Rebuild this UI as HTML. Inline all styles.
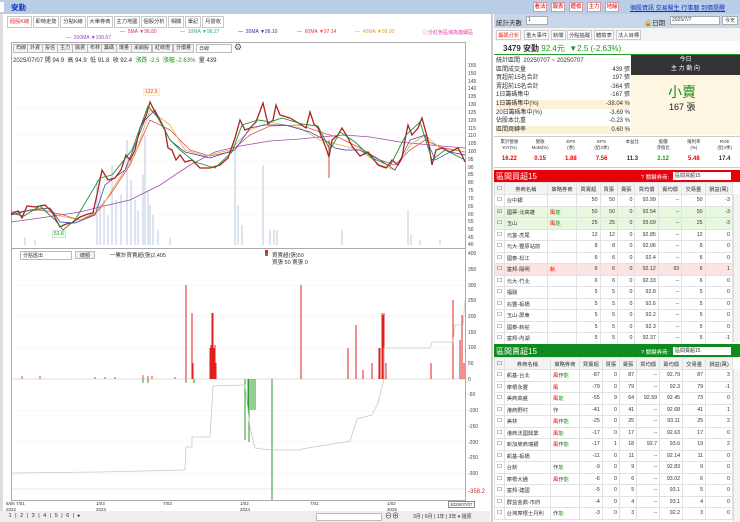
<!DOCTYPE html>
<html><head><meta charset="utf-8">
<style>
*{margin:0;padding:0;box-sizing:border-box}
body{width:740px;height:522px;overflow:hidden;background:#fff;font-family:"Liberation Sans","Noto Sans CJK TC",sans-serif;font-size:6px;color:#333;position:relative}
.a{position:absolute;white-space:nowrap}
.tab{position:absolute;top:16px;height:12px;border:1px solid #c8c8c8;background:#fff;font-size:5.3px;line-height:10px;text-align:center;overflow:hidden}
.btn{position:absolute;top:44px;height:9px;border:1px solid #bbb;background:#f4f4f4;font-size:5px;line-height:7px;padding:0 2px}
.ax{position:absolute;left:468px;font-size:5px;color:#444}
table{border-collapse:collapse;position:absolute;left:494px;width:239px;font-size:5.3px}
td{border:1px solid #e2e2e2;height:11.5px;padding:0 2px;text-align:right;white-space:nowrap}
td.n{text-align:left}
td.c{width:8px;text-align:center}
.r{color:#e00}.g{color:#1a9a1a}
tr.h td{background:#f3f3f3;text-align:center;height:12px}
</style></head><body>
<div class="a" style="left:0;top:0;width:740px;height:14px;background:#b9cde6"></div>
<div class="a" style="left:0;top:2px;width:4px;height:10px;background:#fff"></div>
<div class="a" style="left:11px;top:2px;font-size:7.5px;color:#1330c0;font-weight:bold">安勤</div>
<div class="a" style="left:533px;top:2px;width:14px;height:10px;background:#fff;border:1px solid #d99;color:#d00;font-size:5.5px;line-height:8px;text-align:center">看法</div>
<div class="a" style="left:551px;top:2px;width:14px;height:10px;background:#fff;border:1px solid #d99;color:#d00;font-size:5.5px;line-height:8px;text-align:center">報表</div>
<div class="a" style="left:569px;top:2px;width:14px;height:10px;background:#fff;border:1px solid #d99;color:#d00;font-size:5.5px;line-height:8px;text-align:center">體檢</div>
<div class="a" style="left:587px;top:2px;width:14px;height:10px;background:#fff;border:1px solid #d99;color:#d00;font-size:5.5px;line-height:8px;text-align:center">主力</div>
<div class="a" style="left:605px;top:2px;width:14px;height:10px;background:#fff;border:1px solid #d99;color:#d00;font-size:5.5px;line-height:8px;text-align:center">地緣</div>
<div class="a" style="left:630px;top:3px;font-size:6px;color:#1330c0;text-decoration:underline">個股資訊 交易醫生 行事曆 到價提醒</div>
<div class="a" style="left:0;top:14px;width:3px;height:508px;background:#ddd"></div>
<div class="tab" style="left:7px;width:25px;color:#e03030">個股K線</div>
<div class="tab" style="left:33px;width:26px">即時走勢</div>
<div class="tab" style="left:60px;width:26px">分點K線</div>
<div class="tab" style="left:87px;width:26px">大單券商</div>
<div class="tab" style="left:114px;width:26px">主力地圖</div>
<div class="tab" style="left:141px;width:26px">個股分析</div>
<div class="tab" style="left:168px;width:16px">相關</div>
<div class="tab" style="left:185px;width:16px">筆記</div>
<div class="tab" style="left:202px;width:22px">月營收</div>
<div class="a" style="left:120px;top:29px;color:#d04050;font-size:5px">— &nbsp;5MA ▼98.80</div>
<div class="a" style="left:180px;top:29px;color:#30b080;font-size:5px">— &nbsp;10MA ▼98.27</div>
<div class="a" style="left:238px;top:29px;color:#3030a0;font-size:5px">— &nbsp;20MA ▼99.10</div>
<div class="a" style="left:297px;top:29px;color:#e04040;font-size:5px">— &nbsp;60MA ▼97.14</div>
<div class="a" style="left:355px;top:29px;color:#e0a020;font-size:5px">— &nbsp;40MA ▼99.00</div>
<div class="a" style="left:423px;top:29px;color:#e040a0;font-size:5px">ⓘ分紅色區塊為連續區</div>
<div class="a" style="left:66px;top:35px;color:#a040c0;font-size:5px">— &nbsp;200MA ▼100.67</div>
<div class="a" style="left:11px;top:42px;width:455px;height:459px;border:1px solid #aaa"></div>
<div class="a" style="left:11px;top:248px;width:455px;height:1px;background:#aaa"></div>
<div class="btn" style="left:13px">均線</div><div class="btn" style="left:27px">外資</div><div class="btn" style="left:42px">投信</div><div class="btn" style="left:57px">主力</div><div class="btn" style="left:72px">融資</div><div class="btn" style="left:87px">布林</div><div class="btn" style="left:101px">籌碼</div><div class="btn" style="left:116px">爆量</div><div class="btn" style="left:131px">承銷股</div><div class="btn" style="left:152px">紅綠燈</div><div class="btn" style="left:173px">分價量</div>
<div class="a" style="left:196px;top:44px;width:36px;height:9px;border:1px solid #bbb;font-size:5px;padding-left:2px">日線</div>
<div class="a" style="left:234px;top:42px;font-size:9px;color:#555">⚙</div>
<div class="a" style="left:13px;top:55px;font-size:6px">2025/07/07 開 94.9 &nbsp;高 94.9 &nbsp;低 91.8 &nbsp;收 92.4 &nbsp;<span class="g">漲跌 -2.5 &nbsp;漲幅 -2.63%</span> &nbsp;量 439</div>
<div class="a" style="left:143px;top:88px;font-size:5px;color:#e05020;background:#fff8e8;border:1px solid #eee;padding:0 1px">132.5</div>
<div class="a" style="left:52px;top:230px;font-size:5px;color:#2a8a2a;background:#f0ffe8;border:1px solid #ddd;padding:0 1px">51.6</div>
<svg class="a" style="left:0;top:0" width="740" height="522">
<g stroke="#f0f0f0" stroke-width="0.6">
<line x1="12" y1="108" x2="465" y2="108"/><line x1="12" y1="135" x2="465" y2="135"/><line x1="12" y1="161" x2="465" y2="161"/><line x1="12" y1="188" x2="465" y2="188"/><line x1="12" y1="214" x2="465" y2="214"/>
<line x1="12" y1="285" x2="465" y2="285"/><line x1="12" y1="316" x2="465" y2="316"/><line x1="12" y1="348" x2="465" y2="348"/><line x1="12" y1="411" x2="465" y2="411"/><line x1="12" y1="442" x2="465" y2="442"/><line x1="12" y1="474" x2="465" y2="474"/><line x1="12" y1="489" x2="465" y2="489" stroke="#c8d0f0"/>
</g>
<g stroke="#c4d3e6" stroke-width="1.2">
<path d="M25 245V237M35 245V240M97 245V180M100 245V190M104 245V200M108 245V215M112 245V165M116 245V200M121 245V195M127 245V140M131 245V180M135 245V200M138 245V210M143 245V175M145 245V135M148 245V190M150 245V205M153 245V215M158 245V230M170 245V238M235 245V150M238 245V205M242 245V225M263 245V165M270 245V230M274 245V230M277 245V230M342 245V230M408 245V210M411 245V235M420 245V240M440 245V240"/>
</g>
<polyline fill="none" stroke="#a050b0" stroke-width="0.8" points="11,222 40,218 80,212 100,207 130,200 160,185 190,165 215,152 240,146 270,141 300,139 320,137 345,135 370,137 400,142 430,145 465,148"/>
<polyline fill="none" stroke="#e05050" stroke-width="0.8" points="11,212 40,210 60,214 80,220 95,214 110,195 130,165 150,120 170,130 180,140 190,150 210,156 230,152 250,135 270,126 300,125 320,132 340,138 360,148 380,160 395,165 410,150 425,140 440,147 465,152"/>
<polyline fill="none" stroke="#e0b040" stroke-width="0.8" points="11,215 40,208 60,216 80,220 100,210 115,185 135,155 150,110 170,125 185,150 205,156 230,150 250,130 270,122 300,128 320,140 340,145 360,150 380,165 395,170 410,145 425,135 440,148 465,152"/>
<polyline fill="none" stroke="#3040a0" stroke-width="0.7" points="11,215 30,210 50,208 60,222 75,223 95,215 105,185 125,170 145,120 155,110 170,140 185,152 210,158 235,150 250,128 265,125 285,125 310,132 325,140 335,148 345,150 360,150 380,160 395,170 410,140 425,135 435,160 450,152 465,155"/>
<polyline fill="none" stroke="#b02020" stroke-width="1.3" points="11,214 18,211 22,218 27,206 35,207 45,205 52,212 60,227 66,224 72,223 80,217 88,214 93,213 98,190 102,170 108,180 115,178 121,170 126,155 130,160 135,150 140,128 146,116 150,102 155,112 160,120 165,130 168,148 172,150 176,160 180,155 185,162 192,160 200,168 210,168 220,165 228,158 235,138 240,120 245,130 250,128 256,122 263,103 268,124 273,120 276,105 280,115 290,118 300,124 306,128 310,112 314,124 318,128 322,138 326,148 329,157 332,140 338,135 342,128 348,138 352,146 360,156 368,152 378,165 386,168 392,160 398,165 402,158 405,140 408,125 412,135 418,128 422,118 428,140 432,165 436,150 442,148 450,152 458,148 462,155 465,162"/>
<polyline fill="none" stroke="#1f8f3a" stroke-width="0.9" points="14,214 24,216 40,206 55,220 63,230 75,220 100,178 112,175 132,150 148,106 158,118 170,140 180,150 195,162 215,168 232,152 242,125 258,120 270,122 282,118 302,124 318,126 330,150 340,132 355,142 372,158 390,166 406,135 420,122 432,160 445,150 465,160"/>
<line x1="329" y1="140" x2="329" y2="178" stroke="#c02020" stroke-width="0.8"/>
<line x1="12" y1="379" x2="465" y2="379" stroke="#bbb" stroke-width="0.6"/>
<g stroke="#e02020" stroke-width="1">
<path d="M186 379V285M192 379V313M193 379V363M210 379V348M211 379V345M212 379V313M213 379V313M214 379V348M215 379V345M216 379V363M301 379V285M348 379V348M356 379V325M363 379V370M372 379V363M379 379V348M380 379V348M382 379V313M383 379V315M384 379V313M386 379V363M431 379V363M453 379V300M460 379V340M462 379V315M464 379V363"/>
<path d="M22 379V376M40 379V376M95 379V377M105 379V377M115 379V377M143 379V375M148 379V376M152 379V376M175 379V377" stroke-width="0.8"/>
</g>
<g stroke="#2a9a2a" stroke-width="1">
<path d="M245 379V440M248 379V410M249 379V442M251 379V410M253 379V410M255 379V410M272 379V500M143 379V383M148 379V383M186 379V383M194 379V383"/>
</g>
<polyline fill="none" stroke="#c8c8c8" stroke-width="0.8" points="12,473 100,472 185,470 186,447 192,447 192,437 210,437 213,386 245,385 250,428 255,448 270,450 300,450 302,449 350,441 357,419 372,415 378,403 384,379 384,348 430,348 432,342 453,342 455,325 463,325 465,300"/>
</svg>
<div class="ax" style="top:63px">155</div><div class="ax" style="top:71px">150</div><div class="ax" style="top:79px">145</div><div class="ax" style="top:86px">140</div><div class="ax" style="top:94px">135</div><div class="ax" style="top:102px">130</div><div class="ax" style="top:110px">125</div><div class="ax" style="top:118px">120</div><div class="ax" style="top:126px">115</div><div class="ax" style="top:133px">110</div><div class="ax" style="top:141px">105</div><div class="ax" style="top:149px">100</div><div class="ax" style="top:157px">95</div><div class="ax" style="top:165px">90</div><div class="ax" style="top:172px">85</div><div class="ax" style="top:180px">80</div><div class="ax" style="top:188px">75</div><div class="ax" style="top:196px">70</div><div class="ax" style="top:204px">65</div><div class="ax" style="top:212px">60</div><div class="ax" style="top:219px">55</div><div class="ax" style="top:227px">50</div><div class="ax" style="top:235px">45</div><div class="ax" style="top:242px">40</div>
<div class="ax" style="top:251px">400</div><div class="ax" style="top:267px">350</div><div class="ax" style="top:283px">300</div><div class="ax" style="top:298px">250</div><div class="ax" style="top:314px">200</div><div class="ax" style="top:330px">150</div><div class="ax" style="top:345px">100</div><div class="ax" style="top:361px">50</div><div class="ax" style="top:377px">0</div><div class="ax" style="top:392px">-50</div><div class="ax" style="top:408px">-100</div><div class="ax" style="top:424px">-150</div><div class="ax" style="top:440px">-200</div><div class="ax" style="top:455px">-250</div><div class="ax" style="top:471px">-300</div>
<div class="ax" style="top:489px;color:#c03030;font-size:6px">-358.2</div>
<div class="a" style="left:20px;top:251px;width:52px;height:9px;border:1px solid #bbb;font-size:5px;padding-left:2px">分點匯出</div>
<div class="a" style="left:75px;top:251px;width:20px;height:8px;border:1px solid #bbb;background:#f0f0f0;font-size:5px;text-align:center">總額</div>
<div class="a" style="left:110px;top:251px;font-size:5.5px">一累計買賣超(張)2,405</div>
<div class="a" style="left:265px;top:250px;width:3px;height:6px;background:linear-gradient(#d22 50%,#2a2 50%)"></div>
<div class="a" style="left:272px;top:251px;font-size:5.5px">買賣超(張)50</div>
<div class="a" style="left:272px;top:258px;font-size:5.5px">買張 50 賣張 0</div>
<div class="a" style="left:6px;top:501px;font-size:4.5px;line-height:6px">6/06 7/01<br>2022</div>
<div class="a" style="left:96px;top:501px;font-size:4.5px;line-height:6px">1/03<br>2023</div>
<div class="a" style="left:163px;top:501px;font-size:4.5px">7/03</div>
<div class="a" style="left:240px;top:501px;font-size:4.5px;line-height:6px">1/02<br>2024</div>
<div class="a" style="left:310px;top:501px;font-size:4.5px">7/01</div>
<div class="a" style="left:387px;top:501px;font-size:4.5px;line-height:6px">1/02<br>2025</div>
<div class="a" style="left:448px;top:501px;font-size:4.5px;border:1px solid #888;padding:0 1px">2025/07/07</div>
<div class="a" style="left:0;top:511px;width:490px;height:11px;background:#eee"></div>
<div class="a" style="left:6px;top:513px;font-size:5.5px;letter-spacing:1px">&nbsp;1 | 2 | 3 | 4 | 5 | 6 | ▸</div>
<div class="a" style="left:316px;top:513px;width:66px;height:8px;border:1px solid #bbb;background:#fff"></div>
<div class="a" style="left:385px;top:511px;font-size:7px">⊖⊕</div>
<div class="a" style="left:413px;top:513px;font-size:5px">3月 | 6月 | 1年 | 3年 ▾ 還原</div>
<div class="a" style="left:491px;top:14px;width:2px;height:508px;background:#ccc"></div>
<div class="a" style="left:494px;top:14px;width:246px;height:14px;background:#c8d6ea"></div>
<div class="a" style="left:496px;top:17px;font-size:6.5px">統計天數</div>
<div class="a" style="left:526px;top:16px;width:22px;height:9px;background:#fff;border:1px solid #aaa;font-size:5px;padding-left:1px">1</div>
<div class="a" style="left:644px;top:17px;font-size:6.5px">🔒日期</div>
<div class="a" style="left:670px;top:16px;width:50px;height:9px;background:#fff;border:1px solid #aaa;font-size:5px;padding-left:1px">2025/7/7</div>
<div class="a" style="left:722px;top:16px;width:16px;height:9px;background:#fff;border:1px solid #aaa;font-size:5px;text-align:center">今天</div>
<div class="a" style="left:494px;top:28px;width:246px;height:13px;background:#f4f4f4"></div>
<div class="a" style="left:496px;top:30px;font-size:5.3px;border:1px solid #ccc;background:#fff;padding:0 1px;color:#e03030">籌碼分析</div>
<div class="a" style="left:524px;top:30px;font-size:5.3px;border:1px solid #ccc;background:#fff;padding:0 1px">重大事件</div>
<div class="a" style="left:551px;top:30px;font-size:5.3px;border:1px solid #ccc;background:#fff;padding:0 1px">新聞</div>
<div class="a" style="left:567px;top:30px;font-size:5.3px;border:1px solid #ccc;background:#fff;padding:0 1px">分點追蹤</div>
<div class="a" style="left:594px;top:30px;font-size:5.3px;border:1px solid #ccc;background:#fff;padding:0 1px">體檢表</div>
<div class="a" style="left:616px;top:30px;font-size:5.3px;border:1px solid #ccc;background:#fff;padding:0 1px">法人目標</div>
<div class="a" style="left:503px;top:43px;font-size:8px;font-weight:bold">3479 安勤 <span class="g" style="font-weight:normal">92.4元 &nbsp;▼2.5 (-2.63%)</span></div>
<div class="a" style="left:494px;top:54px;width:246px;height:1px;background:#2a9a2a"></div>
<div class="a" style="left:496px;top:57px;font-size:6px;line-height:8.6px;width:134px">
統計區間 &nbsp;20250707 ~ 20250707<br>
<span style="display:block">區間成交量<span style="float:right">439 張</span></span>
<span style="display:block">買超前15名合計<span style="float:right">197 張</span></span>
<span style="display:block">賣超前15名合計<span style="float:right">-364 張</span></span>
<span style="display:block">1日籌碼集中<span style="float:right">-167 張</span></span>
<span style="display:block;background:#fdf2d8">1日籌碼集中(%)<span style="float:right">-38.04 %</span></span>
<span style="display:block">20日籌碼集中(%)<span style="float:right">-3.69 %</span></span>
<span style="display:block">佔股本比重<span style="float:right">-0.23 %</span></span>
<span style="display:block;background:#fdf2d8">區間周轉率<span style="float:right">0.60 %</span></span>
</div>
<div class="a" style="left:631px;top:55px;width:109px;height:80px;background:#fdf6e0"></div>
<div class="a" style="left:631px;top:55px;width:109px;height:20px;background:#333;color:#fff;font-size:6px;text-align:center;line-height:9px;padding-top:1px">今日<br>主 力 動 向</div>
<div class="a" style="left:668px;top:82px;font-size:14px;color:#1a8a1a">小賣</div>
<div class="a" style="left:669px;top:100px;font-size:9px;color:#222">167 張</div>
<div class="a" style="left:494px;top:136px;width:246px;height:32px;border-top:1px solid #ccc;border-bottom:1px solid #ccc"></div>
<div class="a" style="left:494px;top:139px;width:246px;font-size:4.5px;line-height:6px;display:flex;text-align:center">
<div style="flex:1">累計營收<br>YoY(%)</div><div style="flex:1">營收<br>MoM(%)</div><div style="flex:1">EPS<br>(季)</div><div style="flex:1">EPS<br>(近4季)</div><div style="flex:1">本益比</div><div style="flex:1">股價<br>淨值比</div><div style="flex:1">殖利率<br>(%)</div><div style="flex:1">ROE<br>(近4季)</div></div>
<div class="a" style="left:494px;top:156px;width:246px;font-size:6px;font-weight:bold;display:flex;text-align:center">
<div style="flex:1" class="r">16.22</div><div style="flex:1" class="r">0.15</div><div style="flex:1" class="r">1.88</div><div style="flex:1" class="r">7.56</div><div style="flex:1">11.3</div><div style="flex:1" class="g">2.12</div><div style="flex:1" class="r">5.48</div><div style="flex:1">17.4</div></div>
<div class="a" style="left:494px;top:170px;width:246px;height:12px;background:#e8000a"></div>
<div class="a" style="left:496px;top:171px;font-size:8px;color:#fff">區間買超15</div>
<div class="a" style="left:641px;top:173px;font-size:5.5px;color:#fff">? 關鍵券商:</div>
<div class="a" style="left:673px;top:172px;width:58px;height:8px;background:#fff;font-size:5px;padding-left:2px">區間買超15</div>
<table style="top:182px">
<tr class="h"><td class="c">☐</td><td>券商名稱</td><td>策略券商</td><td>買賣超</td><td>買張</td><td>賣張</td><td>買均價</td><td>賣均價</td><td>交易量</td><td>損益(萬)</td></tr>
<tr><td class="c">☐</td><td class="n">台中銀</td><td></td><td>50</td><td>50</td><td>0</td><td>92.99</td><td>--</td><td>50</td><td>-3</td></tr>
<tr style="background:#e8f8e0"><td class="c">☑</td><td class="n">國票-北高雄</td><td class="n"><span class="r">風</span><span class="g">能</span></td><td>50</td><td>50</td><td>0</td><td>92.54</td><td>--</td><td>50</td><td>-3</td></tr>
<tr style="background:#e8f8e0"><td class="c">☐</td><td class="n">玉山</td><td class="n"><span class="r">風</span><span class="g">能</span></td><td>25</td><td>25</td><td>0</td><td>93.69</td><td>--</td><td>25</td><td>-3</td></tr>
<tr><td class="c">☐</td><td class="n">元富-虎尾</td><td></td><td>12</td><td>12</td><td>0</td><td>92.85</td><td>--</td><td>12</td><td>0</td></tr>
<tr><td class="c">☐</td><td class="n">元大-豐原站前</td><td></td><td>8</td><td>8</td><td>0</td><td>92.06</td><td>--</td><td>8</td><td>0</td></tr>
<tr><td class="c">☐</td><td class="n">國泰-松江</td><td></td><td>6</td><td>6</td><td>0</td><td>92.4</td><td>--</td><td>6</td><td>0</td></tr>
<tr style="background:#fde4e4"><td class="c">☐</td><td class="n">富邦-陽明</td><td class="n r">新</td><td>6</td><td>6</td><td>0</td><td>92.12</td><td>93</td><td>6</td><td>1</td></tr>
<tr><td class="c">☐</td><td class="n">元大-竹北</td><td></td><td>6</td><td>6</td><td>0</td><td>92.33</td><td>--</td><td>6</td><td>0</td></tr>
<tr><td class="c">☐</td><td class="n">福融</td><td></td><td>5</td><td>5</td><td>0</td><td>92.8</td><td>--</td><td>5</td><td>0</td></tr>
<tr><td class="c">☐</td><td class="n">兆豐-板橋</td><td></td><td>5</td><td>5</td><td>0</td><td>92.6</td><td>--</td><td>5</td><td>0</td></tr>
<tr><td class="c">☐</td><td class="n">玉山-屏東</td><td></td><td>5</td><td>5</td><td>0</td><td>92.2</td><td>--</td><td>5</td><td>0</td></tr>
<tr><td class="c">☐</td><td class="n">國泰-新莊</td><td></td><td>5</td><td>5</td><td>0</td><td>92.3</td><td>--</td><td>5</td><td>0</td></tr>
<tr><td class="c">☐</td><td class="n">富邦-內湖</td><td></td><td>5</td><td>5</td><td>0</td><td>92.37</td><td>--</td><td>5</td><td>-1</td></tr>
</table>
<div class="a" style="left:494px;top:344px;width:246px;height:13px;background:#0e8a1e"></div>
<div class="a" style="left:496px;top:346px;font-size:8px;color:#fff">區間賣超15</div>
<div class="a" style="left:641px;top:348px;font-size:5.5px;color:#fff">? 關鍵券商:</div>
<div class="a" style="left:673px;top:347px;width:58px;height:8px;background:#fff;font-size:5px;padding-left:2px">區間賣超15</div>
<table style="top:357px">
<tr class="h"><td class="c">☐</td><td>券商名稱</td><td>策略券商</td><td>買賣超</td><td>買張</td><td>賣張</td><td>買均價</td><td>賣均價</td><td>交易量</td><td>損益(萬)</td></tr>
<tr><td class="c">☐</td><td class="n">凱基-台北</td><td class="n"><span class="r">風</span>作<span class="g">能</span></td><td>-87</td><td>0</td><td>87</td><td>--</td><td>92.79</td><td>87</td><td>3</td></tr>
<tr><td class="c">☐</td><td class="n">摩根永豐</td><td class="n r">風</td><td>-79</td><td>0</td><td>79</td><td>--</td><td>92.3</td><td>79</td><td>-1</td></tr>
<tr><td class="c">☐</td><td class="n">美商高盛</td><td class="n"><span class="r">風</span><span class="g">能</span></td><td>-55</td><td>9</td><td>64</td><td>92.59</td><td>92.45</td><td>73</td><td>0</td></tr>
<tr><td class="c">☐</td><td class="n">港商野村</td><td class="n">作</td><td>-41</td><td>0</td><td>41</td><td>--</td><td>92.68</td><td>41</td><td>1</td></tr>
<tr><td class="c">☐</td><td class="n">美林</td><td class="n"><span class="r">風</span>作<span class="g">能</span></td><td>-25</td><td>0</td><td>25</td><td>--</td><td>93.11</td><td>25</td><td>2</td></tr>
<tr><td class="c">☐</td><td class="n">港商法國興業</td><td class="n"><span class="r">風</span><span class="g">能</span></td><td>-17</td><td>0</td><td>17</td><td>--</td><td>92.63</td><td>17</td><td>0</td></tr>
<tr><td class="c">☐</td><td class="n">新加坡商瑞銀</td><td class="n"><span class="r">風</span>作<span class="g">能</span></td><td>-17</td><td>1</td><td>18</td><td>92.7</td><td>93.6</td><td>19</td><td>2</td></tr>
<tr><td class="c">☐</td><td class="n">凱基-板橋</td><td></td><td>-11</td><td>0</td><td>11</td><td>--</td><td>92.14</td><td>11</td><td>0</td></tr>
<tr><td class="c">☐</td><td class="n">台新</td><td class="n">作<span class="g">能</span></td><td>-9</td><td>0</td><td>9</td><td>--</td><td>92.83</td><td>9</td><td>0</td></tr>
<tr><td class="c">☐</td><td class="n">摩根大通</td><td class="n"><span class="r">風</span>作<span class="g">能</span></td><td>-6</td><td>0</td><td>6</td><td>--</td><td>93.02</td><td>6</td><td>0</td></tr>
<tr><td class="c">☐</td><td class="n">富邦-建國</td><td></td><td>-5</td><td>0</td><td>5</td><td>--</td><td>93.1</td><td>5</td><td>0</td></tr>
<tr><td class="c">☐</td><td class="n">群益金鼎-市府</td><td></td><td>-4</td><td>0</td><td>4</td><td>--</td><td>93.1</td><td>4</td><td>0</td></tr>
<tr><td class="c">☐</td><td class="n">台灣摩根士丹利</td><td class="n">作<span class="g">能</span></td><td>-3</td><td>0</td><td>3</td><td>--</td><td>92.2</td><td>3</td><td>0</td></tr>
</table>
<div class="a" style="left:733px;top:194px;width:7px;height:148px;background:#f4f4f4;border-left:1px solid #ddd"></div>
<div class="a" style="left:733px;top:369px;width:7px;height:153px;background:#f4f4f4;border-left:1px solid #ddd"></div>
</body></html>
